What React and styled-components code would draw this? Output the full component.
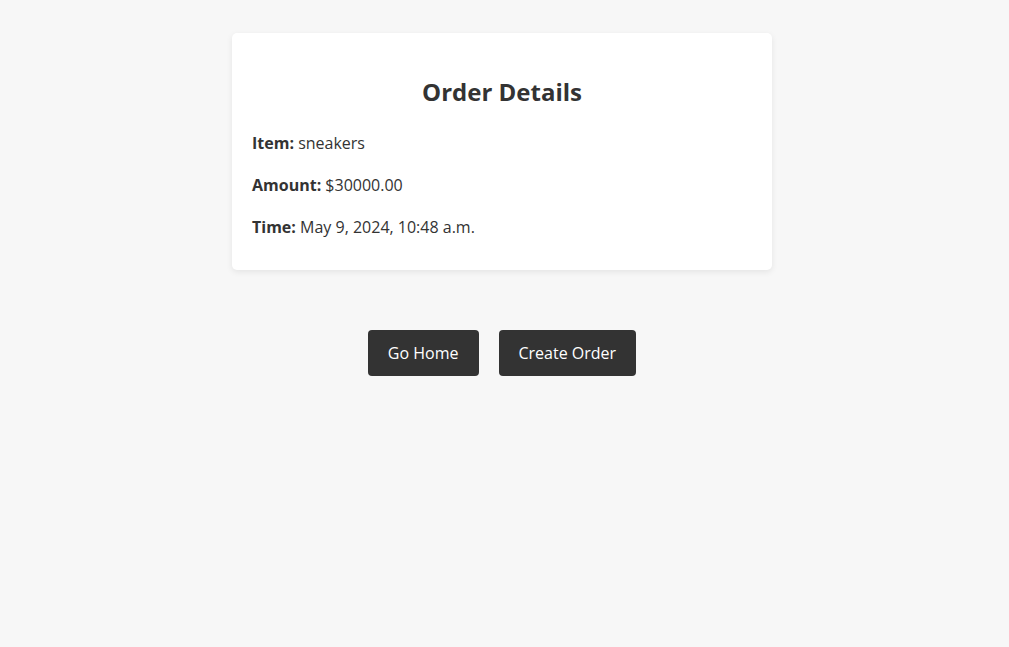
import React from 'react';
import styled, { createGlobalStyle } from 'styled-components';

const GlobalStyle = createGlobalStyle`
  html, body {
    margin: 0;
    padding: 0;
    background: #f7f7f7;
  }

  body {
    font-family: "Open Sans", "Noto Sans", sans-serif;
    color: #333333;
  }
`;

const Page = styled.main`
  box-sizing: border-box;
  min-height: 647px;
  padding: 33px 5px 0 0;
  display: flex;
  flex-direction: column;
  align-items: center;
`;

const Card = styled.section`
  box-sizing: border-box;
  width: 540px;
  background: #ffffff;
  border-radius: 5px;
  padding: 20px 20px 14px;
  box-shadow: 0 2px 6px rgba(0, 0, 0, 0.08);
`;

const Heading = styled.h2`
  font-size: 24px;
  font-weight: 700;
  line-height: 1.6;
  text-align: center;
  margin: 20px 0;
  color: #333333;
`;

const Detail = styled.p`
  font-size: 16px;
  line-height: 1.6;
  margin: 16px 0;

  strong {
    font-weight: 700;
  }
`;

const Actions = styled.div`
  display: flex;
  gap: 20px;
  margin-top: 60px;
`;

const Button = styled.button`
  font-family: inherit;
  font-size: 16px;
  line-height: 22px;
  color: #ffffff;
  background: #333333;
  border: none;
  border-radius: 4px;
  padding: 12px 20px;
  cursor: pointer;
`;

const details = [
  { label: 'Item:', value: 'sneakers' },
  { label: 'Amount:', value: '$30000.00' },
  { label: 'Time:', value: 'May 9, 2024, 10:48 a.m.' },
];

const App = () => (
  <>
    <GlobalStyle/>
    <Page>
      <Card>
        <Heading>
          {'Order Details'}
        </Heading>
        {details.map(d => (
          <Detail key={d.label}>
            <strong>{d.label}</strong> {d.value}
          </Detail>
        ))}
      </Card>
      <Actions>
        <Button>{'Go Home'}</Button>
        <Button>{'Create Order'}</Button>
      </Actions>
    </Page>
  </>
);

export default App;
